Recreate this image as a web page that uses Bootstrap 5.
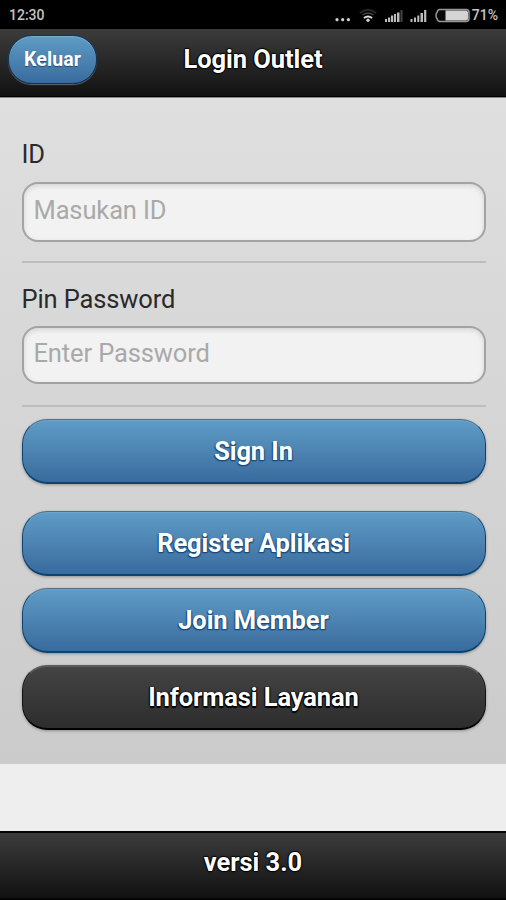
<!DOCTYPE html>
<html lang="id">
<head>
<meta charset="utf-8">
<meta name="viewport" content="width=device-width, initial-scale=1">
<title>Login Outlet</title>
<link href="https://cdn.jsdelivr.net/npm/bootstrap@5.3.0/dist/css/bootstrap.min.css" rel="stylesheet">
<style>
body{font-family:Roboto,"Liberation Sans",sans-serif;background:#eee;height:900px;overflow:hidden;line-height:1}
.statusbar{height:29px;background:#000;color:#c4c4c4;font-size:14px;font-weight:500;padding:0 8px 0 9px}
.bar{height:69px;background:linear-gradient(#3c3c3c,#111);border-bottom:2px solid #000;color:#fff}
.topbar{border-bottom:1px solid #888;box-shadow:inset 0 -1px #000;display:grid;grid-template-columns:1fr auto 1fr;padding:0 8px}
.heading{font-size:25.5px;letter-spacing:-.05px;font-weight:700;line-height:32px;padding-top:14px;text-shadow:0 -1px 1px #000,0 1px 1px #000,1px 0 1px #000,-1px 0 1px #000}
.bottombar .heading{padding-top:13px}
.btn-exit,.btn-exit:hover{height:49px;width:89px;margin-top:6px;border:1px solid #10355a;border-radius:24px;background:linear-gradient(#5f9cc5,#396b9e);color:#fff;font-size:19.5px;letter-spacing:.1px;font-weight:700;padding:0;text-shadow:0 1px 1px #194b7e;box-shadow:inset 0 1px #79acd0,0 1px 1px #666}
.panel{height:666px;background:linear-gradient(#dfdfdf,#cbcbcb);padding:40px 20.5px 0 21.5px}
.field-label{font-size:25.5px;letter-spacing:-.13px;line-height:32px;height:43.500px;color:#2a2a2a;font-weight:400}
.form-control.field{height:60px;border:2px solid #a3a3a3;border-radius:16px;background:#f2f2f2;box-shadow:inset 0 2px 5px #d4d4d4;font-size:25.5px;letter-spacing:-.13px;line-height:32px;padding:0 10px 4px}
.form-control.field::placeholder{color:#a9a9a9}
.form-control.pin{height:58px}
.rule{height:1.500px;background:#bdbdbd;margin:19.500px 0 20px}
.rule.last{margin:21px 0 12.500px}
.action,.action:hover{height:65px;border:1px solid #0d436e;border-top-color:#566d7b;border-bottom-width:2px;border-radius:25px;background:linear-gradient(#5f9cc6,#396b9e);color:#fff;font-size:25.5px;letter-spacing:-.1px;font-weight:700;line-height:32px;padding:0;text-shadow:0 1px 1px #194b7e,1px 1px 1px #194b7e,-1px 1px 1px #194b7e;box-shadow:inset 0 1px #6ca5cd,0 1px 3px rgba(0,0,0,.3)}
.action.register{margin-top:27px}
.action.stacked{margin-top:12px}
.action.dark{background:linear-gradient(#444,#2d2d2d);border-color:#5a5a5a #111 #000;box-shadow:inset 0 1px #606060,0 1px 3px rgba(0,0,0,.3);text-shadow:0 1px 1px #000,1px 0 1px #000,-1px 0 1px #000,0 2px 1px #000}
.bottombar{margin-top:67px;height:69px;border-top:2px solid #050505;border-bottom:2px solid #050505}
</style>
</head>
<body>
<div class="statusbar d-flex justify-content-between align-items-center">
  <span>12:30</span>
  <div class="d-flex align-items-center">
    <svg width="139" height="28" viewBox="333 0 139 28" aria-hidden="true">
      <g fill="#d0d0d0"><circle cx="337" cy="18.7" r="1.6"/><circle cx="342.700" cy="18.7" r="1.6"/><circle cx="348.400" cy="18.7" r="1.6"/><circle cx="368" cy="19.3" r="1.7"/></g>
      <g fill="none" stroke-width="2"><path d="M360 12q8-6.500 16 0" stroke="#292929"/><path d="M362.500 14q5.500-4 11 0" stroke="#444" stroke-width="1.500"/><path d="M364 17q4-3 8 0" stroke="#ddd"/></g>
      <path fill="#bbb" d="M385 18h2v3h-2zm3-1.500h2.200V21H388zm3-2h2.200V21H391zm3-1.500h2v8h-2zm3-1.500h2.500V21H397zM410.500 18h2v3h-2zm3.500-1.500h2V21h-2zm3.300-2h2V21h-2zm3.200-2.500h2.500v9h-2.500zm3.600-3h2.200v12h-2.200z"/>
      <path fill="#444" d="M400.500 9h2v12h-2z"/>
      <path d="M440 8.500h26q3 0 3 3v6q0 3-3 3h-26q-2.500 0-3-3-1-.5-1-3t1-3q.5-3 3-3z" fill="#080808" stroke="#999" stroke-width="1.500"/>
      <path d="M445.500 9.500h20q2.500 0 2.500 2.500v5q0 2.500-2.500 2.500h-20z" fill="#d4d4d4"/>
    </svg>
    <span>71%</span>
  </div>
</div>
<header class="bar topbar">
  <button type="button" class="btn btn-exit">Keluar</button>
  <h1 class="heading text-center m-0">Login Outlet</h1>
</header>
<main class="panel">
  <label class="field-label d-block" for="outlet">ID</label>
  <input class="form-control field" id="outlet" placeholder="Masukan ID">
  <div class="rule"></div>
  <label class="field-label d-block" for="pin">Pin Password</label>
  <input class="form-control field pin" id="pin" type="password" placeholder="Enter Password">
  <div class="rule last"></div>
  <button type="button" class="btn action w-100 d-block">Sign In</button>
  <button type="button" class="btn action register w-100 d-block">Register Aplikasi</button>
  <button type="button" class="btn action stacked w-100 d-block">Join Member</button>
  <button type="button" class="btn action stacked dark w-100 d-block">Informasi Layanan</button>
</main>
<footer class="bar bottombar text-center"><p class="heading m-0">versi 3.0</p></footer>
<script src="https://cdn.jsdelivr.net/npm/bootstrap@5.3.0/dist/js/bootstrap.bundle.min.js"></script>
</body>
</html>
